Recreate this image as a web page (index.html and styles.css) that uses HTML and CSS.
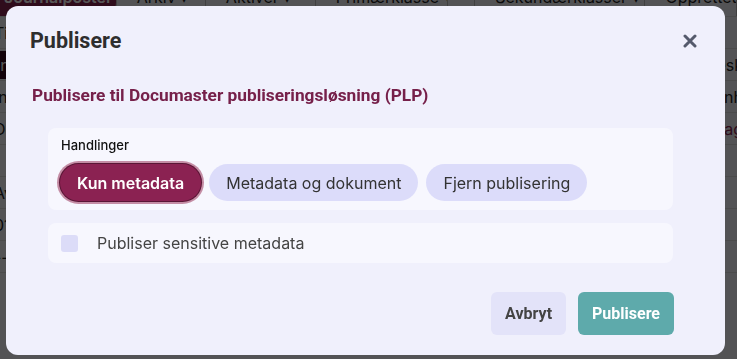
FILE: index.html
```html
<!DOCTYPE html>
<html lang="no">
<head>
  <meta charset="UTF-8">
  <meta name="viewport" content="width=device-width, initial-scale=1.0">
  <title>Publisere</title>
  <link rel="stylesheet" href="styles.css">
</head>
<body>
  <div class="app">
    <div class="tabs">
      <div class="tab tab-active"><span>Journalposter ▾</span></div>
      <div class="tab tab-arkiv"><span>Arkiv ▾</span></div>
      <div class="tab tab-aktiver"><span>Aktiver ▾</span></div>
      <div class="tab tab-prim"><span>Primærklasse ▾</span></div>
      <div class="tab tab-gap"></div>
      <div class="tab tab-sek"><span>Sekundærklasser ▾</span></div>
      <div class="tab"><span>Opprettet</span></div>
    </div>
    <div class="rows">
      <div class="row"><span>Tittel</span><span></span></div>
      <div class="row row-tag"><span class="tag">Ing</span><span>Besk</span></div>
      <div class="row"><span>Ing</span><span>Innh</span></div>
      <div class="row"><span>Do</span><span class="maroon">Utag</span></div>
      <div class="row"><span></span><span></span></div>
      <div class="row"><span>Av</span><span></span></div>
      <div class="row"><span>01</span><span></span></div>
      <div class="row"><span>--</span><span></span></div>
    </div>
  </div>

  <div class="overlay">
    <div class="modal">
      <div class="modal-header">
        <h2>Publisere</h2>
        <button class="close" aria-label="Lukk">
          <svg width="14" height="14" viewBox="0 0 14 14">
            <path d="M2 2 L12 12 M12 2 L2 12" stroke="#555a6c" stroke-width="3" stroke-linecap="round"/>
          </svg>
        </button>
      </div>

      <div class="modal-body">
        <h3>Publisere til Documaster publiseringsløsning (PLP)</h3>

        <div class="card">
          <div class="card-label">Handlinger</div>
          <div class="pills">
            <button class="pill pill-active">Kun metadata</button>
            <button class="pill">Metadata og dokument</button>
            <button class="pill">Fjern publisering</button>
          </div>
        </div>

        <label class="card check-row">
          <span class="checkbox"></span>
          <span>Publiser sensitive metadata</span>
        </label>
      </div>

      <div class="modal-footer">
        <button class="btn btn-cancel">Avbryt</button>
        <button class="btn btn-primary">Publisere</button>
      </div>
    </div>
  </div>
</body>
</html>
```

FILE: styles.css
```css
body {
  margin: 0;
  padding: 0;
  font-family: 'Inter', 'Noto Sans', sans-serif;
  background: #fff;
  width: 737px;
  height: 359px;
  overflow: hidden;
}

/* page behind the dialog */
.app {
  height: 359px;
  background: #f4f4f8;
  color: #222;
  font-size: 16px;
}
.tabs {
  display: flex;
  height: 16px;
  overflow: hidden;
  border-bottom: 1px solid #ddd;
}
.tab {
  box-sizing: border-box;
  padding-left: 20px;
  line-height: 16px;
  height: 16px;
  border-right: 1px solid #bbb;
  white-space: nowrap;
  overflow: hidden;
}
.tab span {
  display: block;
  margin-top: -11px;
}
.tab-active {
  width: 118px;
  background: #8a2452;
  color: #fff;
  font-weight: 600;
  border-radius: 0 0 14px 0;
  padding-left: 4px;
}
.tab-arkiv { width: 90px; }
.tab-aktiver { width: 111px; }
.tab-prim { width: 134px; }
.tab-gap { width: 27px; padding: 0; }
.tab-sek { width: 172px; }
.row {
  display: flex;
  justify-content: space-between;
  height: 31px;
  align-items: center;
  border-bottom: 1px solid #ddd;
  margin-left: -6px;
  margin-right: -6px;
}
.row-tag .tag {
  background: #3a0a20;
  color: #fff;
  padding: 4px 2px;
}
.maroon {
  color: #8a2452;
}

/* dialog */
.overlay {
  position: fixed;
  inset: 0;
  background: rgba(0, 0, 0, 0.66);
  padding: 6px 12px 4px 6px;
  box-sizing: border-box;
}
.modal {
  width: 719px;
  height: 349px;
  background: #f0f0fc;
  border-radius: 12px;
  box-sizing: border-box;
  display: flex;
  flex-direction: column;
}
.modal-header {
  display: flex;
  justify-content: space-between;
  align-items: center;
  padding: 22px 27px 0 24px;
}
.modal-header h2 {
  margin: 0;
  font-family: 'Roboto', sans-serif;
  font-size: 21.5px;
  font-weight: 700;
  line-height: 26px;
  color: #2e2e2e;
}
.close {
  background: none;
  border: none;
  padding: 0;
  width: 16px;
  height: 16px;
  display: flex;
  align-items: center;
  justify-content: center;
  cursor: pointer;
}
.modal-body {
  padding: 0 52px 0 42px;
}
.modal-body h3 {
  margin: 31px 0 23px -16px;
  font-family: 'Roboto', sans-serif;
  font-size: 17.3px;
  font-weight: 700;
  line-height: 20px;
  color: #76204a;
}
.card {
  background: #f7f7fe;
  border-radius: 8px;
  padding: 9px 12px 9px 12px;
}
.card-label {
  font-size: 13px;
  font-weight: 500;
  line-height: 16px;
  color: #111;
  margin-left: 1px;
  margin-bottom: 11px;
}
.pills {
  display: flex;
  gap: 8px;
}
.pill {
  font-family: 'Inter', sans-serif;
  font-size: 16px;
  height: 37px;
  padding: 0 17px;
  border: none;
  border-radius: 19px;
  background: #dcdcfa;
  color: #333;
  cursor: pointer;
}
.pill-active {
  background: #8b2252;
  color: #fff;
  font-weight: 600;
  box-shadow: 0 0 0 1px #5a1535, 0 0 0 3px #c48da5;
}
.check-row {
  display: flex;
  align-items: center;
  gap: 19px;
  margin-top: 13px;
  height: 40px;
  padding: 0 13px;
  box-sizing: border-box;
  font-size: 16px;
  color: #444;
}
.checkbox {
  width: 17px;
  height: 17px;
  border-radius: 3px;
  background: #dcdcf8;
}
.modal-footer {
  margin-top: auto;
  display: flex;
  justify-content: flex-end;
  gap: 12px;
  padding: 0 51px 20px 0;
}
.btn {
  font-family: 'Roboto', sans-serif;
  font-size: 16px;
  font-weight: 700;
  height: 43px;
  padding: 0 14px;
  border: none;
  border-radius: 6px;
  cursor: pointer;
}
.btn-cancel {
  background: #e3e3f9;
  color: #444;
}
.btn-primary {
  background: #5eaaab;
  color: #fff;
}
```
